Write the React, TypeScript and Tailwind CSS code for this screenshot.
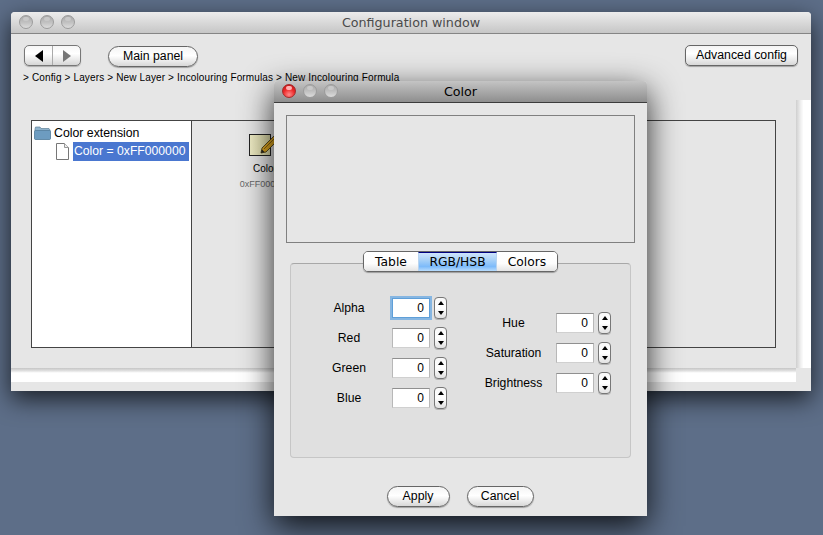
import React from "react";

const sans = "font-['Liberation_Sans',Arial,sans-serif]";
const lucida = "font-['DejaVu_Sans',sans-serif]";

function Light({ red }: { red?: boolean }) {
  return (
    <span
      className={
        "relative block h-[14px] w-[14px] rounded-full border " +
        (red
          ? "border-[#a32a2a] bg-[radial-gradient(circle_at_50%_80%,#ff8a8a_0%,#ee2a2a_50%,#b80f10_100%)]"
          : "border-[#9c9c9c] bg-[linear-gradient(#a9a9a9,#c2c2c2_55%,#dcdcdc)]")
      }
    >
      <span className={"absolute left-[3px] top-[1px] h-[4px] w-[6px] rounded-full " + (red ? "bg-[#ffb0b0]" : "bg-[#c8c8c8]")} />
    </span>
  );
}

function TitleBar({ title, active }: { title: string; active?: boolean }) {
  return (
    <div
      className={
        "relative flex h-[22px] shrink-0 items-center justify-center rounded-t-[4px] border-b pt-[2px] " +
        (active
          ? "border-[#3c3c3c] bg-[linear-gradient(#c4c4c4,#8e8e8e)] text-black"
          : "border-[#858585] bg-[linear-gradient(#ececec,#c6c6c6)] text-[#4a4a4a]")
      }
    >
      <div className="absolute left-[8px] top-[3px] flex gap-[7px]">
        <Light red={active} />
        <Light />
        <Light />
      </div>
      <span className={lucida + " text-[12.7px] leading-none"}>{title}</span>
    </div>
  );
}

function Pill({ w, children }: { w: string; children: React.ReactNode }) {
  return (
    <button
      className={
        sans +
        " flex h-[21px] items-center justify-center rounded-full border border-[#666] bg-[linear-gradient(#f4f4f4,#ffffff_45%,#d8d8d8)] pb-[1px] text-[12.3px] text-black shadow-[0_1px_1px_rgba(0,0,0,0.3)] " +
        w
      }
    >
      {children}
    </button>
  );
}

function Stepper() {
  return (
    <div className="flex h-[22px] w-[13px] flex-col items-center justify-between rounded-[4px] border border-[#777] bg-[linear-gradient(#f8f8f8,#ffffff_50%,#e2e2e2)] py-[3px] shadow-[0_1px_0_rgba(0,0,0,0.2)]">
      <span className="h-0 w-0 border-x-[3px] border-b-[4px] border-x-transparent border-b-black" />
      <span className="h-0 w-0 border-x-[3px] border-t-[4px] border-x-transparent border-t-black" />
    </div>
  );
}

function Field({ label, labelW, focus }: { label: string; labelW: string; focus?: boolean }) {
  return (
    <div className="flex h-[22px] items-center">
      <span className={sans + " pr-[11px] text-center text-[12.2px] text-black " + labelW}>{label}</span>
      <div
        className={
          sans +
          " flex h-[20px] w-[38px] items-center justify-end border bg-white pr-[5px] text-[12px] text-black " +
          (focus
            ? "border-[#5f9fd8] shadow-[0_0_0_2px_#86b6e2]"
            : "border-[#d0d0d0] border-t-[#909090] border-x-[#b8b8b8]")
        }
      >
        0
      </div>
      <div className="ml-[4px]">
        <Stepper />
      </div>
    </div>
  );
}

function Folder() {
  return (
    <svg width="17" height="14" viewBox="0 0 17 14" className="shrink-0">
      <path d="M1 3 L1.5 1 H6 L7 2.5 H15 L16 4 V13 H1 Z" fill="#8fb3cc" stroke="#5f8199" strokeWidth="0.7" />
      <rect x="0.5" y="4.5" width="16" height="9" rx="1" fill="#6d9cc0" stroke="#4d7896" strokeWidth="0.7" />
    </svg>
  );
}

function Doc() {
  return (
    <svg width="13" height="17" viewBox="0 0 13 17" className="shrink-0">
      <path d="M0.5 0.5 H8.5 L12.5 4.5 V16.5 H0.5 Z" fill="#fff" stroke="#777" />
      <path d="M8.5 0.5 V4.5 H12.5" fill="#eee" stroke="#999" />
    </svg>
  );
}

function Pencil() {
  return (
    <svg width="32" height="24" viewBox="0 0 32 24" className="block">
      <defs>
        <linearGradient id="pad" x1="0" y1="0" x2="1" y2="0">
          <stop offset="0" stopColor="#efecc6" />
          <stop offset="1" stopColor="#dcd9a6" />
        </linearGradient>
      </defs>
      <rect x="0.5" y="0.5" width="21" height="21" fill="url(#pad)" stroke="#222" />
      <path d="M13 14 L27 0 L31 4 L17 18 L12 19 Z" fill="#e0a820" stroke="#3a3010" strokeWidth="0.8" />
      <path d="M15 15 L28 2" stroke="#8a6410" strokeWidth="1" />
      <path d="M12 19 L13 15.5 L15.5 18 Z" fill="#222" />
    </svg>
  );
}

function MainWindow() {
  return (
    <div className="absolute left-[11px] top-[12px] flex h-[379px] w-[800px] flex-col rounded-t-[4px] bg-[#e6e6e6] shadow-[0_8px_24px_rgba(0,0,0,0.72)]">
      <TitleBar title="Configuration window" />
      <div className="flex min-h-0 flex-1 flex-col">
        <div className="flex items-start justify-between pl-[13px] pr-[13px] pt-[11px]">
          <div className="flex items-start">
            <div className="flex h-[21px] w-[57px] rounded-[5px] border border-[#777] bg-[linear-gradient(#f6f6f6,#ffffff_40%,#d6d6d6)] shadow-[0_1px_1px_rgba(0,0,0,0.25)]">
              <div className="flex w-[28px] items-center justify-center border-r border-[#aaa]">
                <span className="h-0 w-0 border-y-[6px] border-r-[8px] border-y-transparent border-r-black" />
              </div>
              <div className="flex flex-1 items-center justify-center">
                <span className="h-0 w-0 border-y-[6px] border-l-[8px] border-y-transparent border-l-[#777]" />
              </div>
            </div>
            <div className="ml-[27px] mt-[1px]">
              <Pill w="w-[90px]">Main panel</Pill>
            </div>
          </div>
          <button
            className={
              sans +
              " flex h-[21px] w-[113px] items-center justify-center rounded-[5px] border border-[#666] bg-[linear-gradient(#f4f4f4,#ffffff_40%,#d8d8d8)] pb-[1px] text-[12.3px] text-black shadow-[0_1px_1px_rgba(0,0,0,0.3)]"
            }
          >
            Advanced config
          </button>
        </div>
        <div className={sans + " pl-[12px] pt-[4px] text-[10px] leading-[14px] tracking-[0.14px] text-black whitespace-nowrap"}>
          {"> Config > Layers > New Layer > Incolouring Formulas > New Incolouring Formula"}
        </div>
        <div className="flex min-h-0 flex-1 pt-[15px]">
          <div className="flex min-w-0 flex-1 flex-col">
            <div className="flex-1 pl-[20px] pr-[20px] pt-[20px]">
              <div className="flex h-[228px] border border-[#444]">
                <div className="w-[160px] shrink-0 border-r border-[#444] bg-white pl-[2px] pr-[2px] pt-[3px]">
                  <div className="flex h-[18px] items-center gap-[3px]">
                    <Folder />
                    <span className={sans + " text-[12.3px] text-black"}>Color extension</span>
                  </div>
                  <div className="flex items-center pl-[22px]">
                    <Doc />
                    <span className={sans + " ml-[4px] flex h-[19px] w-[116px] items-center pl-[1px] text-[12.2px] text-white bg-[#4a77d0]"}>
                      Color = 0xFF000000
                    </span>
                  </div>
                </div>
                <div className="flex-1 pl-[43px] pt-[13px]">
                  <div className="flex w-[60px] flex-col items-center">
                    <div className="self-start pl-[14px]">
                      <Pencil />
                    </div>
                    <span className={sans + " mt-[5px] text-[10px] leading-[12px] text-black"}>Color</span>
                    <span className={sans + " mt-[4px] text-[9px] leading-[11px] text-[#666]"}>0xFF000000</span>
                  </div>
                </div>
              </div>
            </div>
            <div className="h-[14px] shrink-0 bg-[linear-gradient(#c6c6c6,#e0e0e0_20%,#ffffff_35%,#ffffff)]" />
          </div>
          <div className="flex w-[15px] shrink-0 flex-col">
            <div className="flex-1 bg-[linear-gradient(90deg,#cfcfcf,#eeeeee_30%,#ffffff_50%,#ffffff)]" />
            <div className="h-[14px]" />
          </div>
        </div>
        <div className="h-[9px] shrink-0" />
      </div>
    </div>
  );
}

function Tab({ w, active, children }: { w: string; active?: boolean; children: React.ReactNode }) {
  return (
    <div
      className={
        lucida +
        " flex h-full items-center justify-center pt-[1px] text-[12.3px] " +
        w +
        (active
          ? " border-t border-[#000080] border-x-[#b8d4f0] border-x bg-[linear-gradient(#cfe4fb,#a7d0f7_40%,#7dbbfa_75%,#b8dcfd)] text-black"
          : " bg-[linear-gradient(#ffffff,#fdfdfd_60%,#e4e4e4)] text-black")
      }
    >
      {children}
    </div>
  );
}

function Dialog() {
  return (
    <div className="absolute left-[274px] top-[81px] flex h-[435px] w-[373px] flex-col rounded-t-[4px] bg-[#e6e6e6] shadow-[0_10px_32px_rgba(0,0,0,0.85)]">
      <TitleBar title="Color" active />
      <div className="flex flex-1 flex-col px-[12px] pt-[12px]">
        <div className="h-[128px] border border-[#808080]" />
        <div className="relative mx-[4px] mt-[20px] h-[195px] rounded-[4px] border border-[#c6c6c6] border-t-[#a8a8a8] bg-[#e0e0e0]">
          <div className="absolute left-[72px] top-[-13px] flex h-[21px] w-[195px] overflow-hidden rounded-[5px] border border-[#666] shadow-[0_1px_1px_rgba(0,0,0,0.3)]">
            <Tab w="w-[54px]">Table</Tab>
            <Tab w="w-[79px]" active>RGB/HSB</Tab>
            <Tab w="flex-1">Colors</Tab>
          </div>
          <div className="flex pl-[26px] pt-[33px]">
            <div className="flex flex-col gap-[8px]">
              <Field label="Alpha" labelW="w-[75px]" focus />
              <Field label="Red" labelW="w-[75px]" />
              <Field label="Green" labelW="w-[75px]" />
              <Field label="Blue" labelW="w-[75px]" />
            </div>
            <div className="ml-[35px] mt-[15px] flex flex-col gap-[8px]">
              <Field label="Hue" labelW="w-[74px]" />
              <Field label="Saturation" labelW="w-[74px]" />
              <Field label="Brightness" labelW="w-[74px]" />
            </div>
          </div>
        </div>
        <div className="mt-[28px] flex justify-center gap-[17px] pr-[1px]">
          <Pill w="w-[63px]">Apply</Pill>
          <Pill w="w-[67px]">Cancel</Pill>
        </div>
      </div>
    </div>
  );
}

export default function App() {
  return (
    <div className="relative h-[535px] w-[823px] overflow-hidden bg-[#5d6e88]">
      <MainWindow />
      <Dialog />
    </div>
  );
}
